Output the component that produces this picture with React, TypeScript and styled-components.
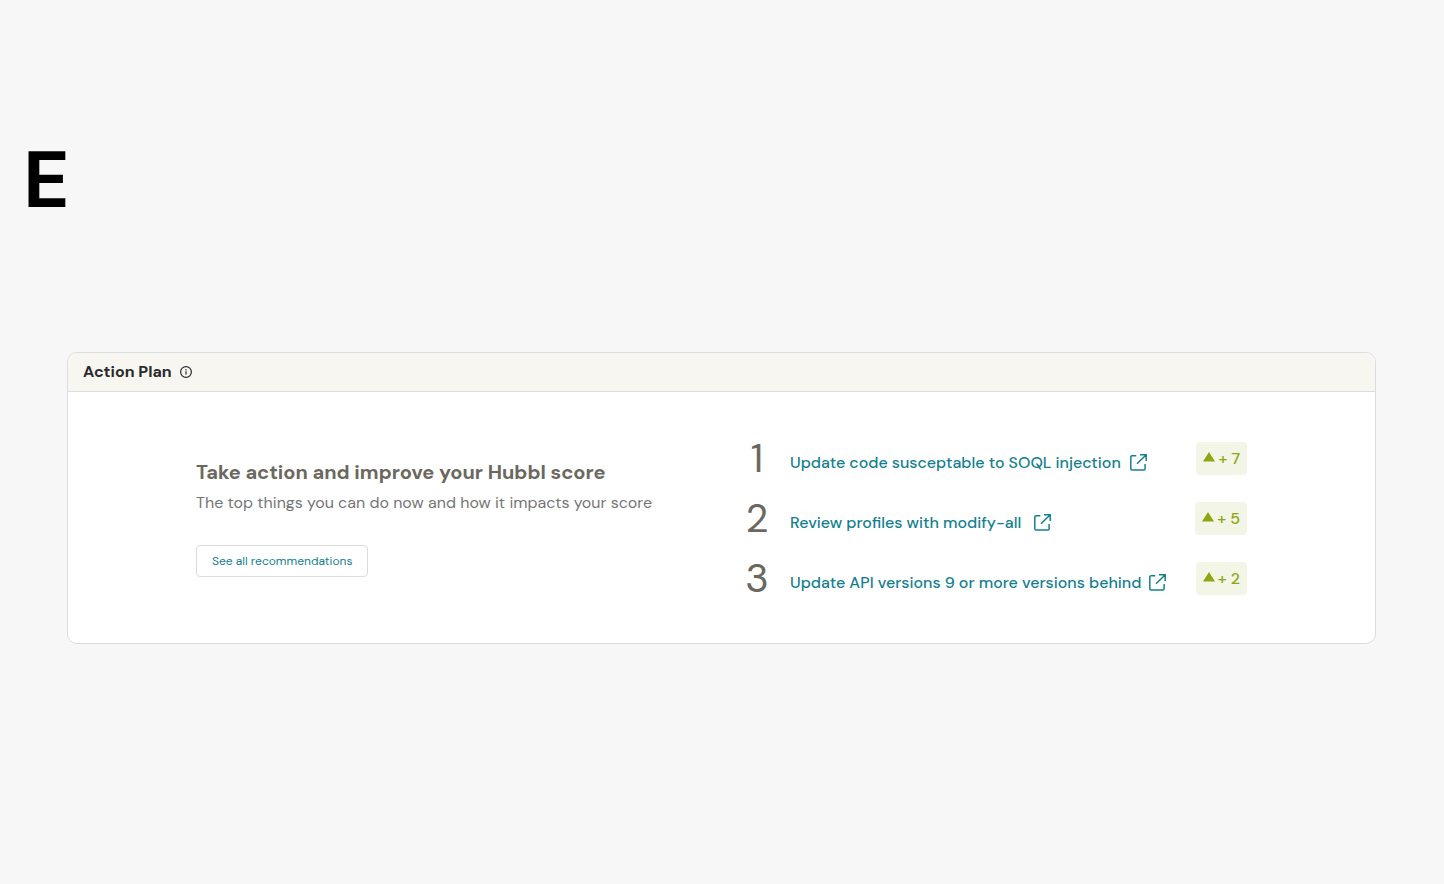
import React from "react";
import styled, { createGlobalStyle } from "styled-components";

const GlobalStyle = createGlobalStyle`
  * { box-sizing: border-box; }
  body {
    margin: 0;
    background: #f7f7f7;
    font-family: "DM Sans", Inter, "Liberation Sans", sans-serif;
  }
`;

const Page = styled.main`
  min-height: 100vh;
  padding: 130px 68px 0 67px;
`;

const PageTitle = styled.h1`
  margin: 0 0 122px -44px;
  font-size: 80px;
  line-height: 100px;
  font-weight: 700;
  color: #000;
`;

const Card = styled.section`
  border: 1px solid #dcdde0;
  border-radius: 10px;
  background: #fff;
  overflow: hidden;
`;

const CardHeader = styled.header`
  display: flex;
  align-items: center;
  gap: 8px;
  height: 39px;
  padding: 0 15px;
  border-bottom: 1px solid #dcdde0;
  background: #f7f6f1;
  color: #2b2b2b;
`;

const CardTitle = styled.h2`
  margin: 0;
  font-size: 16px;
  line-height: 24px;
  font-weight: 700;
`;

const CardBody = styled.div`
  display: flex;
  align-items: flex-start;
  justify-content: space-between;
  padding: 50px 128px 48px;
`;

const Intro = styled.div`
  display: flex;
  flex-direction: column;
  align-items: flex-start;
  padding-top: 16px;
`;

const IntroTitle = styled.h3`
  margin: 0 0 5px;
  font-size: 20px;
  line-height: 28px;
  font-weight: 700;
  color: #6b6860;
`;

const IntroText = styled.p`
  margin: 0 0 30px;
  font-size: 16px;
  line-height: 24px;
  font-weight: 400;
  color: #757575;
`;

const OutlineButton = styled.button`
  height: 32px;
  padding: 0 15px;
  border: 1px solid #dcdcdc;
  border-radius: 4px;
  background: #fff;
  font: 400 12px/16px "DM Sans", Inter, "Liberation Sans", sans-serif;
  color: #14808f;
  cursor: pointer;
`;

const ActionList = styled.ol`
  flex: 0 0 502px;
  display: flex;
  flex-direction: column;
  gap: 27px;
  margin: 0;
  padding: 0;
  list-style: none;
`;

const ActionRow = styled.li`
  display: flex;
  align-items: center;
  height: 33px;
`;

const Rank = styled.span`
  width: 24px;
  margin-right: 21px;
  text-align: center;
  font-size: 40px;
  line-height: 33px;
  font-weight: 400;
  color: #6b6860;
`;

const ActionLink = styled.a<{ $gap: number }>`
  display: flex;
  align-items: center;
  gap: ${(p) => p.$gap}px;
  padding-top: 9px;
  font-size: 16px;
  line-height: 24px;
  font-weight: 500;
  white-space: nowrap;
  color: #14808f;
  text-decoration: none;
`;

const Gain = styled.span`
  display: flex;
  align-items: center;
  gap: 3px;
  height: 33px;
  margin-left: auto;
  padding: 0 7px;
  border-radius: 4px;
  background: #f3f5e6;
  font-size: 16px;
  line-height: 24px;
  font-weight: 500;
  white-space: nowrap;
  color: #8ea610;
`;

const InfoIcon = () => (
  <svg width="12" height="12" viewBox="0 0 12 12" fill="none" stroke="currentColor" strokeWidth="1.2" aria-hidden="true">
    <circle cx="6" cy="6" r="5.4" />
    <path d="M6 5.3v3.2M6 3.2v1.2" />
  </svg>
);

const ExternalIcon = () => (
  <svg width="18" height="18" viewBox="0 0 18 18" fill="none" stroke="currentColor" strokeWidth="1.5" aria-hidden="true">
    <path d="M6.3 1.7H2Q.8 1.7.8 2.9V14.8Q.8 16 2 16H13.9Q15.1 16 15.1 14.8V10M10 .8H16.2V7M16 1L7 9.8" />
  </svg>
);

const UpIcon = () => (
  <svg width="12" height="14" viewBox="0 0 12 14" fill="currentColor" aria-hidden="true">
    <path d="M6 0L12 9.5H0z" />
  </svg>
);

const actions = [
  { label: "Update code susceptable to SOQL injection", gain: 7, gap: 9 },
  { label: "Review profiles with modify-all", gain: 5, gap: 13 },
  { label: "Update API versions 9 or more versions behind", gain: 2, gap: 8 },
];

export default function App() {
  return (
    <>
      <GlobalStyle />
      <Page>
        <PageTitle>E</PageTitle>
        <Card>
          <CardHeader>
            <CardTitle>Action Plan</CardTitle>
            <InfoIcon />
          </CardHeader>
          <CardBody>
            <Intro>
              <IntroTitle>Take action and improve your Hubbl score</IntroTitle>
              <IntroText>The top things you can do now and how it impacts your score</IntroText>
              <OutlineButton type="button">See all recommendations</OutlineButton>
            </Intro>
            <ActionList>
              {actions.map((action, index) => (
                <ActionRow key={action.label}>
                  <Rank>{index + 1}</Rank>
                  <ActionLink href="#" $gap={action.gap}>
                    {action.label}
                    <ExternalIcon />
                  </ActionLink>
                  <Gain>
                    <UpIcon />+ {action.gain}
                  </Gain>
                </ActionRow>
              ))}
            </ActionList>
          </CardBody>
        </Card>
      </Page>
    </>
  );
}
